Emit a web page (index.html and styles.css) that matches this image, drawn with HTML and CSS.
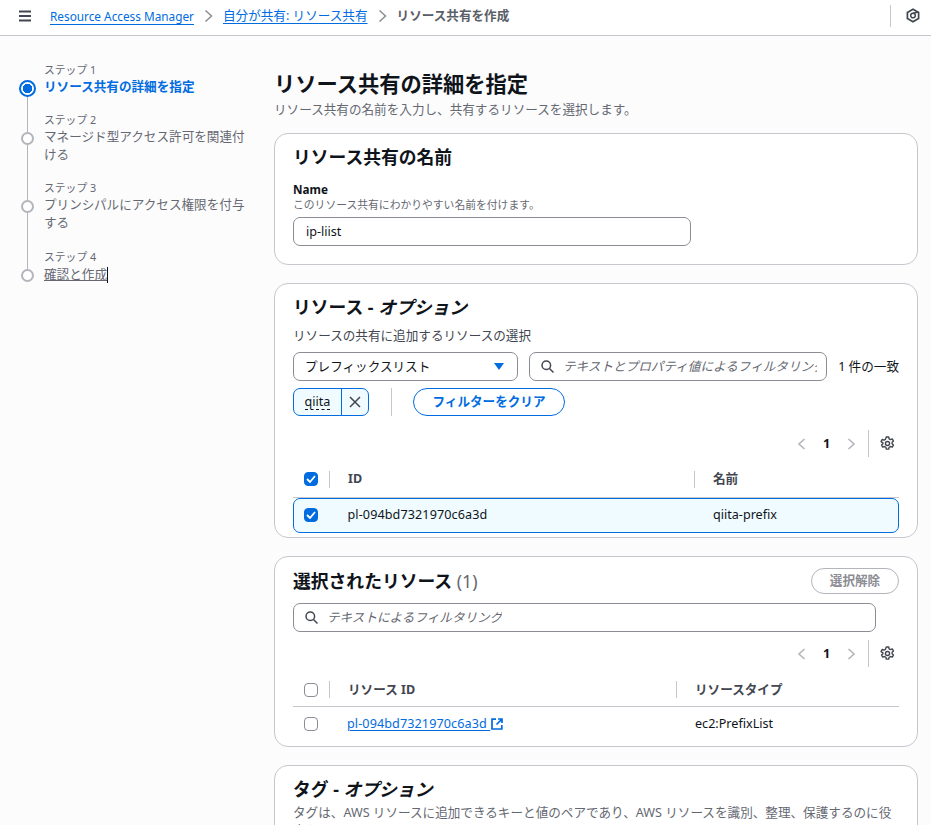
FILE: index.html
```html
<!DOCTYPE html>
<html lang="ja">
<head>
<meta charset="utf-8">
<title>リソース共有を作成</title>
<link rel="stylesheet" href="styles.css">
</head>
<body>
<header class="topbar">
  <svg class="menu-icon" width="12" height="12" viewBox="0 0 12 12"><path d="M0 1.500h12M0 6h12M0 10.500h12" stroke="#424650" stroke-width="1.800" fill="none"/></svg>
  <nav class="crumbs">
    <a class="crumb-link crumb-latin">Resource Access Manager</a>
    <svg class="chev" width="9" height="14" viewBox="0 0 9 14"><path d="M1.500 1.500 7.500 7l-6 5.500" stroke="#8c8c94" stroke-width="1.500" fill="none"/></svg>
    <a class="crumb-link">自分が共有: リソース共有</a>
    <svg class="chev" width="9" height="14" viewBox="0 0 9 14"><path d="M1.500 1.500 7.500 7l-6 5.500" stroke="#8c8c94" stroke-width="1.500" fill="none"/></svg>
    <span class="crumb-current">リソース共有を作成</span>
  </nav>
  <div class="top-right">
    <svg width="14" height="15" viewBox="0 0 14 15"><path d="M7 1.200 12.600 4.400v6.200L7 13.800 1.400 10.600V4.400Z" stroke="#424650" stroke-width="1.700" fill="none"/><circle cx="7" cy="7.500" r="2.300" stroke="#424650" stroke-width="1.500" fill="none"/><path d="M7 5.200 12.500 4" stroke="#424650" stroke-width="1.500"/></svg>
  </div>
</header>

<div class="layout">
  <aside class="steps">
    <div class="step step-active">
      <div class="step-label">ステップ 1</div>
      <div class="step-title">リソース共有の詳細を指定</div>
    </div>
    <div class="step">
      <div class="step-label">ステップ 2</div>
      <div class="step-title">マネージド型アクセス許可を関連付ける</div>
    </div>
    <div class="step step-third">
      <div class="step-label">ステップ 3</div>
      <div class="step-title">プリンシパルにアクセス権限を付与する</div>
    </div>
    <div class="step step-last">
      <div class="step-label">ステップ 4</div>
      <div class="step-title"><span class="step-focus">確認と作成</span></div>
    </div>
  </aside>

  <main class="main">
    <h1 class="page-title">リソース共有の詳細を指定</h1>
    <p class="page-desc">リソース共有の名前を入力し、共有するリソースを選択します。</p>

    <section class="card card-name">
      <h2 class="card-title">リソース共有の名前</h2>
      <div class="field-label">Name</div>
      <div class="field-hint">このリソース共有にわかりやすい名前を付けます。</div>
      <div class="text-input">ip-liist</div>
    </section>

    <section class="card card-res">
      <h2 class="card-title"><span>リソース - </span><em>オプション</em></h2>
      <div class="res-desc">リソースの共有に追加するリソースの選択</div>
      <div class="filter-row">
        <div class="select">
          <span>プレフィックスリスト</span>
          <svg width="10" height="7" viewBox="0 0 10 7"><path d="M0 0h10L5 7Z" fill="#006ce0"/></svg>
        </div>
        <div class="search search-flex">
          <svg class="search-icon" width="13" height="13" viewBox="0 0 13 13"><circle cx="5.300" cy="5.300" r="4.300" stroke="#424650" stroke-width="1.500" fill="none"/><path d="m8.500 8.500 4 4" stroke="#424650" stroke-width="1.500"/></svg>
          <span class="placeholder">テキストとプロパティ値によるフィルタリング</span>
        </div>
        <div class="match">1 件の一致</div>
      </div>
      <div class="token-row">
        <div class="token">
          <span class="token-text"><span class="token-dash">qiita</span></span>
          <span class="token-x"><svg width="12" height="12" viewBox="0 0 12 12"><path d="m1 1 10 10M11 1 1 11" stroke="#424650" stroke-width="1.500"/></svg></span>
        </div>
        <div class="token-div"></div>
        <div class="btn-clear">フィルターをクリア</div>
      </div>
      <div class="pager pager-res">
        <svg width="9" height="12" viewBox="0 0 9 12"><path d="M7.500 1 2 6l5.500 5" stroke="#b4b4bb" stroke-width="1.600" fill="none"/></svg>
        <b class="page-num">1</b>
        <svg width="9" height="12" viewBox="0 0 9 12"><path d="M1.500 1 7 6l-5.500 5" stroke="#b4b4bb" stroke-width="1.600" fill="none"/></svg>
        <span class="pager-div"></span>
        <svg class="gear" width="15" height="15" viewBox="0 0 16 16"><path d="M6.700 1h2.600l.4 2 1.500.8 1.900-.7 1.300 2.300-1.500 1.300v1.600l1.500 1.300-1.300 2.300-1.900-.7-1.500.8-.4 2H6.700l-.4-2-1.500-.8-1.900.7-1.300-2.300 1.500-1.300V7.300L1.100 6l1.300-2.300 1.900.7 1.500-.8Z" stroke="#424650" stroke-width="1.500" fill="none" stroke-linejoin="round"/><circle cx="8" cy="8" r="2.200" stroke="#424650" stroke-width="1.500" fill="none"/></svg>
      </div>
      <div class="thead thead-res">
        <span class="check check-on"><svg width="10" height="8" viewBox="0 0 10 8"><path d="m1 4 3 3 5-6" stroke="#fff" stroke-width="1.800" fill="none"/></svg></span>
        <span class="th-sep"></span>
        <span class="th th-id">ID</span>
        <span class="th-sep"></span>
        <span class="th">名前</span>
      </div>
      <div class="row-selected">
        <span class="check check-on"><svg width="10" height="8" viewBox="0 0 10 8"><path d="m1 4 3 3 5-6" stroke="#fff" stroke-width="1.800" fill="none"/></svg></span>
        <span class="td td-id">pl-094bd7321970c6a3d</span>
        <span class="td">qiita-prefix</span>
      </div>
    </section>

    <section class="card card-sel">
      <div class="sel-head">
        <h2 class="card-title">選択されたリソース <span class="count">(1)</span></h2>
        <div class="btn-disabled">選択解除</div>
      </div>
      <div class="search search-wide">
        <svg class="search-icon" width="13" height="13" viewBox="0 0 13 13"><circle cx="5.300" cy="5.300" r="4.300" stroke="#424650" stroke-width="1.500" fill="none"/><path d="m8.500 8.500 4 4" stroke="#424650" stroke-width="1.500"/></svg>
        <span class="placeholder">テキストによるフィルタリング</span>
      </div>
      <div class="pager pager-sel">
        <svg width="9" height="12" viewBox="0 0 9 12"><path d="M7.500 1 2 6l5.500 5" stroke="#b4b4bb" stroke-width="1.600" fill="none"/></svg>
        <b class="page-num">1</b>
        <svg width="9" height="12" viewBox="0 0 9 12"><path d="M1.500 1 7 6l-5.500 5" stroke="#b4b4bb" stroke-width="1.600" fill="none"/></svg>
        <span class="pager-div"></span>
        <svg class="gear" width="15" height="15" viewBox="0 0 16 16"><path d="M6.700 1h2.600l.4 2 1.500.8 1.900-.7 1.300 2.300-1.500 1.300v1.600l1.500 1.300-1.300 2.300-1.900-.7-1.500.8-.4 2H6.700l-.4-2-1.500-.8-1.900.7-1.300-2.300 1.500-1.300V7.300L1.100 6l1.300-2.300 1.900.7 1.500-.8Z" stroke="#424650" stroke-width="1.500" fill="none" stroke-linejoin="round"/><circle cx="8" cy="8" r="2.200" stroke="#424650" stroke-width="1.500" fill="none"/></svg>
      </div>
      <div class="thead thead-sel">
        <span class="check"></span>
        <span class="th-sep"></span>
        <span class="th th-rid">リソース ID</span>
        <span class="th-sep"></span>
        <span class="th">リソースタイプ</span>
      </div>
      <div class="row-plain">
        <span class="check"></span>
        <span class="td td-rid"><a class="res-link">pl-094bd7321970c6a3d </a><svg class="ext-icon" width="12" height="12" viewBox="0 0 12 12"><path d="M5 1.200H1v9.800h9.800V7M7 1h4v4M11 1 5.500 6.500" stroke="#006ce0" stroke-width="1.700" fill="none"/></svg></span>
        <span class="td">ec2:PrefixList</span>
      </div>
    </section>

    <section class="card card-tag">
      <h2 class="card-title"><span>タグ - </span><em>オプション</em></h2>
      <p class="tag-desc">タグは、AWS リソースに追加できるキーと値のペアであり、AWS リソースを識別、整理、保護するのに役立ちます。</p>
    </section>
  </main>
</div>
</body>
</html>
```

FILE: styles.css
```css
*, *::before, *::after { box-sizing: border-box; }
html, body { margin: 0; padding: 0; height: 825px; overflow: hidden; }
body {
  background: #fcfcfd;
  color: #0f141a;
  font-family: "Noto Sans", "Noto Sans CJK JP", sans-serif;
  font-size: 12.6px;
  line-height: 18px;
}
h1, h2, p { margin: 0; }

.topbar {
  height: 36px;
  background: #fff;
  border-bottom: 1px solid #c6c6cd;
  display: flex;
  align-items: center;
  padding: 0 11px 4px 19px;
}
.menu-icon { flex: none; margin-right: 19px; }
.crumbs { display: flex; align-items: center; gap: 10px; flex: 1; }
.crumb-link { color: #006ce0; text-decoration: underline; text-underline-offset: 3px; font-size: 12.6px; }
.crumb-latin { font-size: 11.8px; }
.crumb-current { color: #5a5e68; font-weight: 700; font-size: 12.6px; }
.chev { flex: none; }
.top-right {
  height: 22px;
  border-left: 1px solid #c6c6cd;
  padding-left: 15px;
  display: flex;
  align-items: center;
}

.layout { display: flex; }
.steps { width: 274px; flex: none; padding: 25px 20px 0 19px; }
.step { position: relative; padding: 0 0 15px 25px; }
.step-third { padding-bottom: 16px; }
.step::before {
  content: "";
  position: absolute;
  left: 8px;
  top: 30px;
  bottom: -24px;
  width: 1px;
  background: #b4b4bb;
}
.step-last::before { display: none; }
.step::after {
  content: "";
  position: absolute;
  left: 2px;
  top: 21px;
  width: 13px;
  height: 13px;
  border: 2px solid #b4b4bb;
  border-radius: 50%;
  background: #fff;
}
.step-active::after {
  left: 0;
  top: 19px;
  width: 17px;
  height: 17px;
  border-color: #006ce0;
  background: radial-gradient(circle, #006ce0 0 4.500px, #fff 5px);
}
.step-label { color: #656871; font-size: 10.8px; line-height: 17px; }
.step-title { color: #656871; line-height: 18px; }
.step-last .step-title { padding-top: 1px; }
.step-active .step-title { color: #006ce0; font-weight: 700; }
.step-focus { text-decoration: underline; border-right: 1px solid #0f141a; display: inline-block; line-height: 16px; }

.main { width: 644px; flex: none; padding-top: 34px; }
.page-title { font-size: 21.25px; line-height: 28px; font-weight: 700; }
.page-desc { color: #656871; font-size: 12.6px; line-height: 18px; margin-bottom: 14px; margin-top: 3px; }

.card {
  background: #fff;
  border: 1px solid #c6c6cd;
  border-radius: 14px;
  padding: 11px 18px 0;
  margin-bottom: 18px;
}
.card-title { font-size: 17.8px; line-height: 24px; font-weight: 700; }
.card-title em { font-style: italic; }
.count { color: #656871; font-weight: 400; }

.card-name { height: 132px; }
.field-label { font-weight: 700; font-size: 11.7px; line-height: 17px; margin-top: 12px; }
.field-hint { color: #656871; font-size: 10.8px; line-height: 14px; }
.text-input {
  width: 398px;
  height: 29px;
  margin-top: 5px;
  border: 1px solid #8c8c94;
  border-radius: 7px;
  padding: 0 12px;
  display: flex;
  align-items: center;
}

.card-res { height: 255px; }
.res-desc { color: #424650; line-height: 18px; margin-top: 8px; }
.filter-row { display: flex; align-items: center; gap: 11px; margin-top: 7px; height: 29px; }
.select {
  width: 225px;
  flex: none;
  height: 29px;
  border: 1px solid #8c8c94;
  border-radius: 7px;
  padding: 0 13px 0 11px;
  display: flex;
  align-items: center;
  justify-content: space-between;
}
.search {
  height: 29px;
  border: 1px solid #8c8c94;
  border-radius: 7px;
  padding: 0 9px 0 11px;
  display: flex;
  align-items: center;
  gap: 9px;
  white-space: nowrap;
}
.search-flex { flex: 1; min-width: 0; }
.search-icon { flex: none; }
.placeholder { color: #656871; font-style: italic; overflow: hidden; min-width: 0; }
.match { flex: none; font-size: 12.6px; }

.token-row { display: flex; align-items: center; margin-top: 7px; height: 28px; }
.token {
  width: 76px;
  height: 28px;
  border: 1px solid #006ce0;
  border-radius: 7px;
  background: #f0fbff;
  display: flex;
  overflow: hidden;
}
.token-text { width: 48px; display: flex; align-items: center; justify-content: center; border-right: 1px solid #006ce0; }
.token-dash { border-bottom: 1px dashed #0f141a; line-height: 14px; padding-top: 1px; }
.token-x { flex: 1; display: flex; align-items: center; justify-content: center; }
.token-div { width: 1px; height: 28px; background: #c6c6cd; margin: 0 21px 0 22px; }
.btn-clear {
  width: 152px;
  height: 28px;
  border: 1px solid #006ce0;
  border-radius: 14px;
  color: #006ce0;
  font-weight: 700;
  display: flex;
  align-items: center;
  justify-content: center;
}

.pager { display: flex; align-items: center; justify-content: flex-end; height: 27px; padding-right: 4px; }
.pager-res { margin-top: 14px; }
.pager-sel { margin-top: 8px; }
.page-num { width: 41px; text-align: center; font-size: 12.6px; }
.pager-div { width: 1px; height: 27px; background: #c6c6cd; margin: 0 11px 0 12px; }

.thead { display: flex; align-items: center; padding-left: 11px; border-bottom: 1px solid #c6c6cd; }
.thead-res { margin-top: 4px; height: 37px; }
.thead-sel { margin-top: 6px; height: 34px; }
.th { font-weight: 700; color: #424650; font-size: 12.6px; padding-left: 18px; }
.th-id { width: 364px; }
.th-rid { width: 346px; }
.th-sep { width: 1px; height: 17px; background: #c6c6cd; }
.th-sep:nth-child(2) { margin-left: 11px; }
.check {
  width: 14px;
  height: 14px;
  flex: none;
  border-radius: 4px;
  border: 1px solid #8c8c94;
  background: #fff;
  display: inline-flex;
  align-items: center;
  justify-content: center;
}
.check-on { background: #006ce0; border-color: #006ce0; }

.row-selected {
  height: 35px;
  border: 1px solid #006ce0;
  border-radius: 7px;
  background: #f0fbff;
  display: flex;
  align-items: center;
  padding: 0 0 2px 10px;
}
.row-plain { height: 33px; display: flex; align-items: center; padding-left: 11px; }
.td-id { width: 365.500px; margin-left: 29.500px; letter-spacing: 0.1px; }
.td-rid { width: 348px; margin-left: 29px; display: flex; align-items: center; }
.res-link { color: #006ce0; text-decoration: underline; text-underline-offset: 2px; white-space: pre; letter-spacing: 0.1px; }
.ext-icon { flex: none; margin-left: 1px; }

.card-sel { height: 191px; }
.sel-head { display: flex; justify-content: space-between; align-items: center; height: 26px; }
.sel-head .card-title { margin-bottom: 1px; }
.btn-disabled {
  width: 88px;
  height: 26px;
  border: 1px solid #b4b4bb;
  border-radius: 13px;
  color: #8c8c94;
  font-weight: 700;
  display: flex;
  align-items: center;
  justify-content: center;
}
.search-wide { width: 583px; margin-top: 9px; }

.card-tag { height: 120px; }
.tag-desc { color: #656871; line-height: 18px; margin-top: 3px; }
```
